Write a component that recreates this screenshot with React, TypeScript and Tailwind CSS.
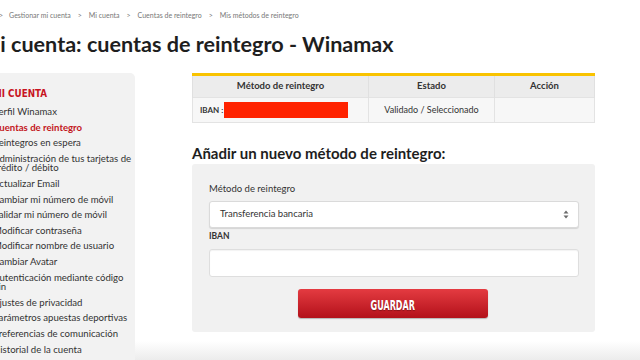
const font = { fontFamily: "Lato, 'Open Sans', sans-serif" };
const narrow = { fontFamily: "'Liberation Sans Narrow', 'DejaVu Sans Condensed', sans-serif" };

const menu = [
  { label: "Perfil Winamax" },
  { label: "Cuentas de reintegro", active: true },
  { label: "Reintegros en espera" },
  { label: "Administración de tus tarjetas de\ncrédito / débito" },
  { label: "Actualizar Email" },
  { label: "Cambiar mi número de móvil" },
  { label: "Validar mi número de móvil" },
  { label: "Modificar contraseña" },
  { label: "Modificar nombre de usuario" },
  { label: "Cambiar Avatar" },
  { label: "Autenticación mediante código\npin" },
  { label: "Ajustes de privacidad" },
  { label: "Parámetros apuestas deportivas" },
  { label: "Preferencias de comunicación" },
  { label: "Historial de la cuenta" },
];

const crumbs = ["Gestionar mi cuenta", "Mi cuenta", "Cuentas de reintegro", "Mis métodos de reintegro"];

function SelectArrows() {
  return (
    <svg width="6" height="9" viewBox="0 0 6 9" className="text-[#6b6b6b]">
      <path d="M3 0.5 L5.5 3.6 H0.5 Z" fill="currentColor" />
      <path d="M3 8.5 L5.5 5.4 H0.5 Z" fill="currentColor" />
    </svg>
  );
}

export default function App() {
  return (
    <div
      className="w-[640px] h-[360px] overflow-hidden text-[#333] bg-[linear-gradient(to_bottom,#ffffff_341px,#ececec_360px)]"
      style={font}
    >
      {/* Breadcrumb */}
      <div className="flex items-center h-[30px] pt-[1px] text-[7px] text-[#777] ml-[-1px]">
        <span className="mr-[6px]">&gt;</span>
        {crumbs.map((c, i) => (
          <span key={c} className="flex items-center">
            <span>{c}</span>
            {i < crumbs.length - 1 && <span className="mx-[7px]">&gt;</span>}
          </span>
        ))}
      </div>

      <div className="ml-[-17px]">
        <h1 className="ml-[-3px] text-[21.6px] font-bold leading-[28px] text-[#1e1e1e]">
          Mi cuenta: cuentas de reintegro - Winamax
        </h1>

        <div className="flex mt-[15px]">
          {/* Sidebar */}
          <aside className="w-[152px] h-[300px] shrink-0 bg-[#f2f2f2] rounded-tr-[5px] pl-[10px] pt-[13px]">
            <div
              className="text-[10.5px] font-bold text-[#c8141f] leading-[14px] scale-x-[0.93] origin-left"
              style={narrow}
            >
              MI CUENTA
            </div>
            <ul className="mt-[4px]">
              {menu.map((m) => (
                <li
                  key={m.label}
                  className={
                    "whitespace-pre-line text-[9.6px] leading-[9.6px] py-[3px] " +
                    (m.active ? "font-bold text-[#c3161c]" : "text-[#333]")
                  }
                >
                  {m.label}
                </li>
              ))}
            </ul>
          </aside>

          {/* Main */}
          <main className="ml-[57px] w-[403px]">
            <table className="w-full border-collapse border-t-[3px] border-t-[#f9c300] text-[9.5px]">
              <thead>
                <tr className="bg-[#ececec] h-[23px]">
                  <th className="w-[176px] font-bold border-x border-[#e0e0e0]">Método de reintegro</th>
                  <th className="w-[126px] font-bold border-x border-[#e0e0e0]">Estado</th>
                  <th className="font-bold border-x border-[#e0e0e0]">Acción</th>
                </tr>
              </thead>
              <tbody>
                <tr className="bg-[#f7f7f7] h-[25px] border-y border-[#e3e3e3]">
                  <td className="border-x border-[#e3e3e3] pl-[7px]">
                    <div className="flex items-center">
                      <span className="font-bold text-[8px]">IBAN :</span>
                      <span className="ml-[1px] w-[124px] h-[16px] bg-[#ff2300]" />
                    </div>
                  </td>
                  <td className="border-x border-[#e3e3e3] text-center text-[9px]">Validado / Seleccionado</td>
                  <td className="border-x border-[#e3e3e3]" />
                </tr>
              </tbody>
            </table>

            <h2 className="mt-[20px] text-[15px] font-bold leading-[20px] text-[#1e1e1e]">
              Añadir un nuevo método de reintegro:
            </h2>

            <div className="mt-[1px] h-[168px] bg-[#f1f1f1] rounded-[3px] px-[17px] pt-[19px]">
              <label className="block text-[9.5px] leading-[12px]">Método de reintegro</label>
              <div className="mt-[6px] h-[27px] w-[370px] bg-white border border-[#dadada] rounded-[3px] shadow-[0_1px_1px_rgba(0,0,0,0.12)] flex items-center justify-between pl-[10px] pr-[9px]">
                <span className="text-[9.5px]">Transferencia bancaria</span>
                <SelectArrows />
              </div>
              <label className="block mt-[2px] text-[8.5px] font-bold leading-[12px]">IBAN</label>
              <div className="mt-[7px] h-[28px] w-[370px] bg-white border border-[#dedede] rounded-[3px] shadow-[inset_0_1px_1px_rgba(0,0,0,0.05)]" />
              <div className="flex justify-center mt-[12px] pr-[2px]">
                <button className="w-[190px] h-[29px] rounded-[3px] text-white bg-[linear-gradient(to_bottom,#e43b41,#b3111a)] shadow-[0_1px_1px_rgba(0,0,0,0.25)] [text-shadow:0_1px_1px_rgba(0,0,0,0.3)]">
                  <span className="inline-block text-[14px] font-bold scale-x-[0.64]" style={narrow}>
                    GUARDAR
                  </span>
                </button>
              </div>
            </div>
          </main>
        </div>
      </div>
    </div>
  );
}
